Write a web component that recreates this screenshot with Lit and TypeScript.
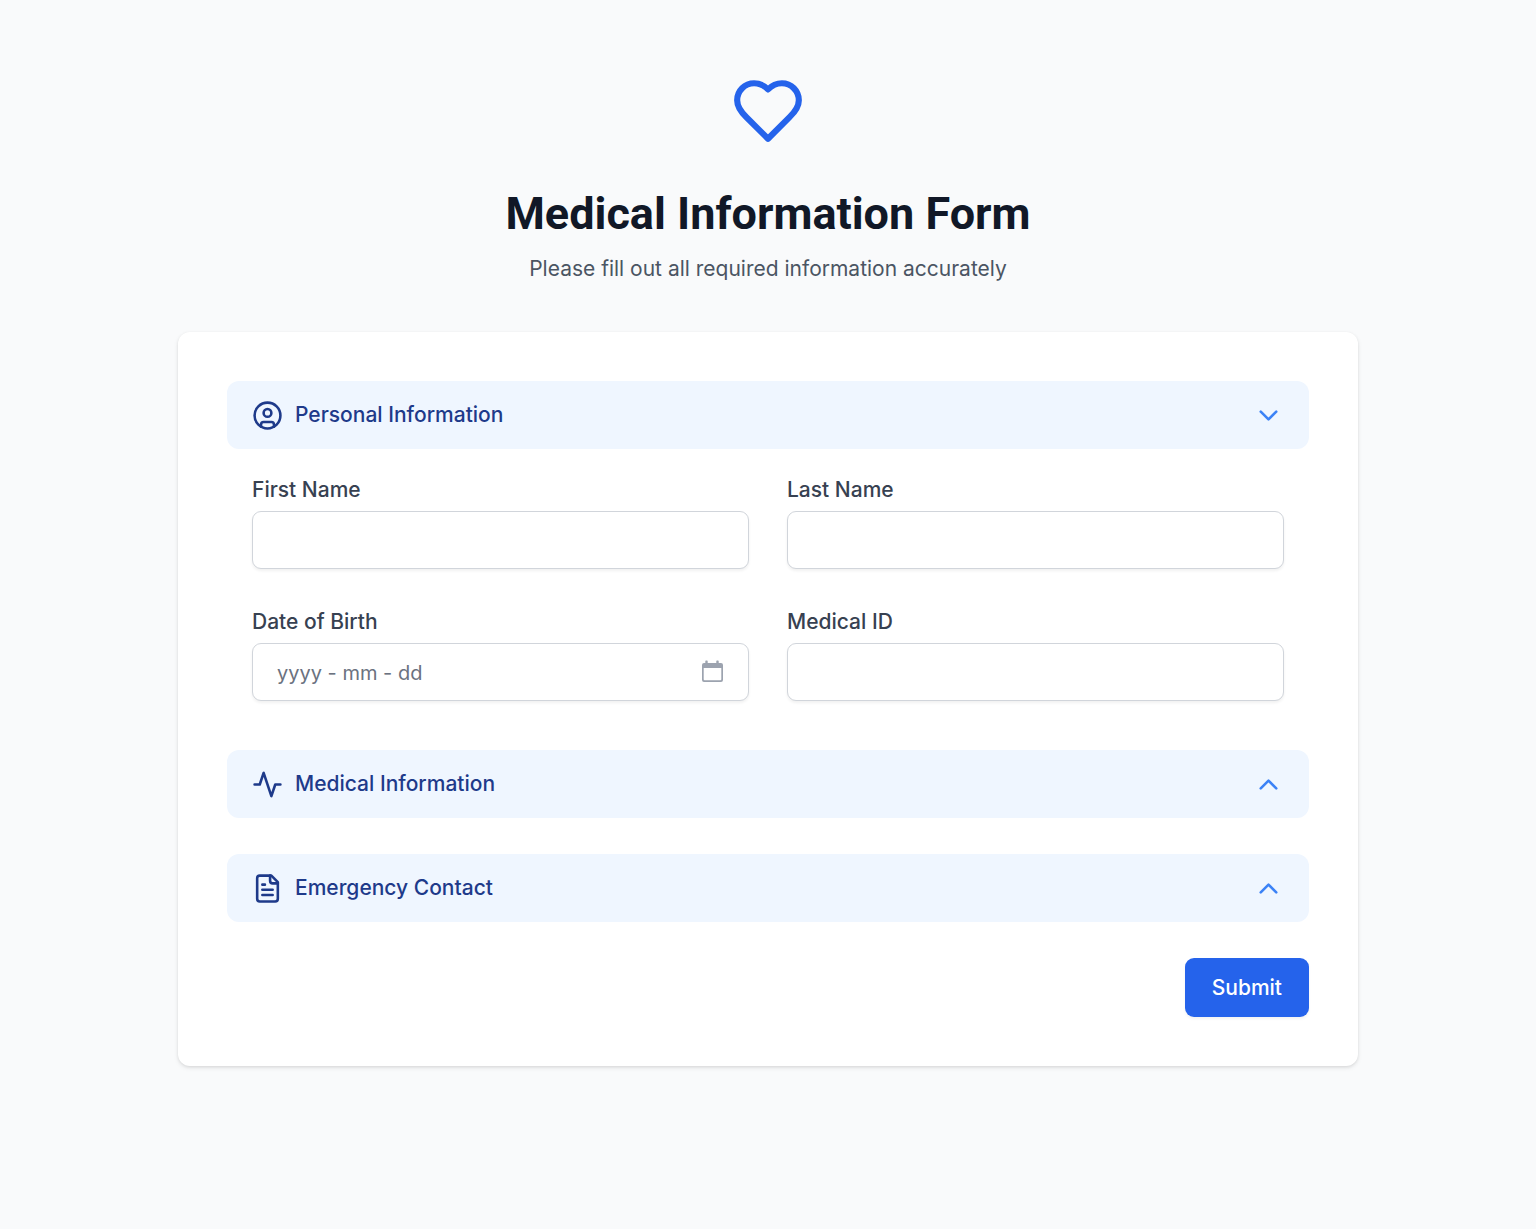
import { LitElement, html, css, svg, nothing } from "lit";
import { customElement, state } from "lit/decorators.js";

type SectionId = "personal" | "medical" | "emergency";

const userIcon = svg`
  <circle cx="12" cy="12" r="10"></circle>
  <circle cx="12" cy="10" r="3"></circle>
  <path d="M7 20.662V19a2 2 0 0 1 2-2h6a2 2 0 0 1 2 2v1.662"></path>`;

const activityIcon = svg`<path d="M22 12h-4l-3 9L9 3l-3 9H2"></path>`;

const fileIcon = svg`
  <path d="M15 2H6a2 2 0 0 0-2 2v16a2 2 0 0 0 2 2h12a2 2 0 0 0 2-2V7Z"></path>
  <path d="M14 2v4a2 2 0 0 0 2 2h4"></path>
  <path d="M10 9H8"></path>
  <path d="M16 13H8"></path>
  <path d="M16 17H8"></path>`;

const heartIcon = svg`
  <path d="M19 14c1.49-1.46 3-3.21 3-5.5A5.5 5.5 0 0 0 16.5 3c-1.76 0-3 .5-4.5 2-1.5-1.5-2.74-2-4.5-2A5.5 5.5 0 0 0 2 8.5c0 2.3 1.5 4.05 3 5.5l7 7Z"></path>`;

const sections: { id: SectionId; title: string; icon: unknown }[] = [
  { id: "personal", title: "Personal Information", icon: userIcon },
  { id: "medical", title: "Medical Information", icon: activityIcon },
  { id: "emergency", title: "Emergency Contact", icon: fileIcon },
];

const fields: Record<SectionId, { id: string; label: string; date?: boolean }[]> = {
  personal: [
    { id: "first-name", label: "First Name" },
    { id: "last-name", label: "Last Name" },
    { id: "birth-date", label: "Date of Birth", date: true },
    { id: "medical-id", label: "Medical ID" },
  ],
  medical: [
    { id: "conditions", label: "Conditions" },
    { id: "allergies", label: "Allergies" },
  ],
  emergency: [
    { id: "contact-name", label: "Contact Name" },
    { id: "contact-phone", label: "Phone Number" },
  ],
};

@customElement("app-root")
export class AppRoot extends LitElement {
  @state() private open: SectionId | null = "personal";

  static styles = css`
    :host {
      display: block;
      min-height: 100vh;
      box-sizing: border-box;
      padding: 74px 24px;
      background: #f9fafb;
      color: #111827;
      font-family: Inter, "Liberation Sans", sans-serif;
      font-size: 21px;
      line-height: 32px;
    }
    *, *::before, *::after { box-sizing: border-box; }
    .page { max-width: 1180px; margin: 0 auto; }
    .intro { text-align: center; margin-bottom: 47px; }
    .icon {
      display: block;
      flex: none;
      width: 31px;
      height: 31px;
      fill: none;
      stroke: currentColor;
      stroke-width: 2;
      stroke-linecap: round;
      stroke-linejoin: round;
    }
    .icon.heart { width: 74px; height: 74px; margin: 0 auto 37px; color: #2563eb; }
    h1 {
      margin: 0 0 11px;
      font-family: Roboto, Inter, sans-serif;
      font-size: 45px;
      line-height: 57px;
      font-weight: 700;
    }
    .lead { margin: 0; color: #4b5563; }
    .card {
      display: flex;
      flex-direction: column;
      gap: 36px;
      padding: 49px;
      background: #fff;
      border-radius: 12px;
      box-shadow: 0 2px 5px rgb(0 0 0 / 8%), 0 1px 3px rgb(0 0 0 / 8%);
    }
    h2 { margin: 0; font: inherit; }
    .toggle {
      display: flex;
      align-items: center;
      gap: 12px;
      width: 100%;
      height: 68px;
      padding: 0 25px;
      border: 0;
      border-radius: 12px;
      background: #eff6ff;
      color: #1e3a8a;
      font: inherit;
      font-weight: 500;
      text-align: left;
      cursor: pointer;
    }
    .name { flex: 1; }
    .chevron { color: #3b82f6; }
    .grid {
      display: grid;
      grid-template-columns: repeat(2, minmax(0, 1fr));
      gap: 37px 38px;
      padding: 25px 25px 13px;
    }
    .field { display: flex; flex-direction: column; gap: 5px; }
    label { color: #374151; font-weight: 500; }
    .box {
      display: flex;
      align-items: center;
      height: 58px;
      padding: 0 24px;
      border: 1px solid #d1d5db;
      border-radius: 9px;
      background: #fff;
      box-shadow: 0 2px 3px rgb(0 0 0 / 6%);
    }
    .box:focus-within { border-color: #3b82f6; }
    input {
      flex: 1;
      min-width: 0;
      height: 100%;
      padding: 0;
      border: 0;
      outline: 0;
      background: none;
      color: #111827;
      font: inherit;
    }
    input::placeholder { color: #6b7280; opacity: 1; font-size: 20px; }
    .pick { display: flex; padding: 0; border: 0; background: none; color: #9ca3af; cursor: pointer; }
    .calendar { display: block; width: 24px; height: 24px; }
    .actions { display: flex; justify-content: flex-end; }
    .submit {
      height: 59px;
      padding: 0 27px;
      border: 0;
      border-radius: 9px;
      background: #2563eb;
      color: #fff;
      font: inherit;
      font-weight: 500;
      box-shadow: 0 2px 3px rgb(0 0 0 / 5%);
      cursor: pointer;
    }
  `;

  private toggle(id: SectionId) {
    this.open = this.open === id ? null : id;
  }

  private renderField(f: { id: string; label: string; date?: boolean }) {
    return html`
      <div class="field">
        <label for=${f.id}>${f.label}</label>
        <div class="box">
          <input id=${f.id} name=${f.id} type="text" placeholder=${f.date ? "yyyy - mm - dd" : nothing} />
          ${f.date
            ? html`<button class="pick" type="button" aria-label="Choose date">
                <svg class="calendar" viewBox="0 0 24 24" aria-hidden="true">
                  <path d="M6 .5h1a.7.7 0 0 1 .7.7V3h8.600V1.200a.7.7 0 0 1 .7-.7h1a.7.7 0 0 1 .7.7V3H21a2 2 0 0 1 2 2v15a2 2 0 0 1-2 2H4a2 2 0 0 1-2-2V5a2 2 0 0 1 2-2h1.300V1.200A.7.7 0 0 1 6 .5ZM3.700 8v11.300a1 1 0 0 0 1 1h15.600a1 1 0 0 0 1-1V8Z" fill="currentColor" fill-rule="evenodd"></path>
                </svg>
              </button>`
            : nothing}
        </div>
      </div>`;
  }

  render() {
    return html`
      <main class="page">
        <header class="intro">
          <svg class="icon heart" viewBox="0 0 24 24" aria-hidden="true">${heartIcon}</svg>
          <h1>Medical Information Form</h1>
          <p class="lead">Please fill out all required information accurately</p>
        </header>
        <form class="card" @submit=${(e: Event) => e.preventDefault()}>
          ${sections.map((s) => {
            const open = this.open === s.id;
            return html`
              <section>
                <h2>
                  <button class="toggle" type="button" aria-expanded=${open} @click=${() => this.toggle(s.id)}>
                    <svg class="icon" viewBox="0 0 24 24" aria-hidden="true">${s.icon}</svg>
                    <span class="name">${s.title}</span>
                    <svg class="icon chevron" viewBox="0 0 24 24" aria-hidden="true">
                      <path d=${open ? "m6 9 6 6 6-6" : "m18 15-6-6-6 6"}></path>
                    </svg>
                  </button>
                </h2>
                ${open ? html`<div class="grid">${fields[s.id].map((f) => this.renderField(f))}</div>` : nothing}
              </section>`;
          })}
          <div class="actions"><button class="submit" type="submit">Submit</button></div>
        </form>
      </main>`;
  }
}
